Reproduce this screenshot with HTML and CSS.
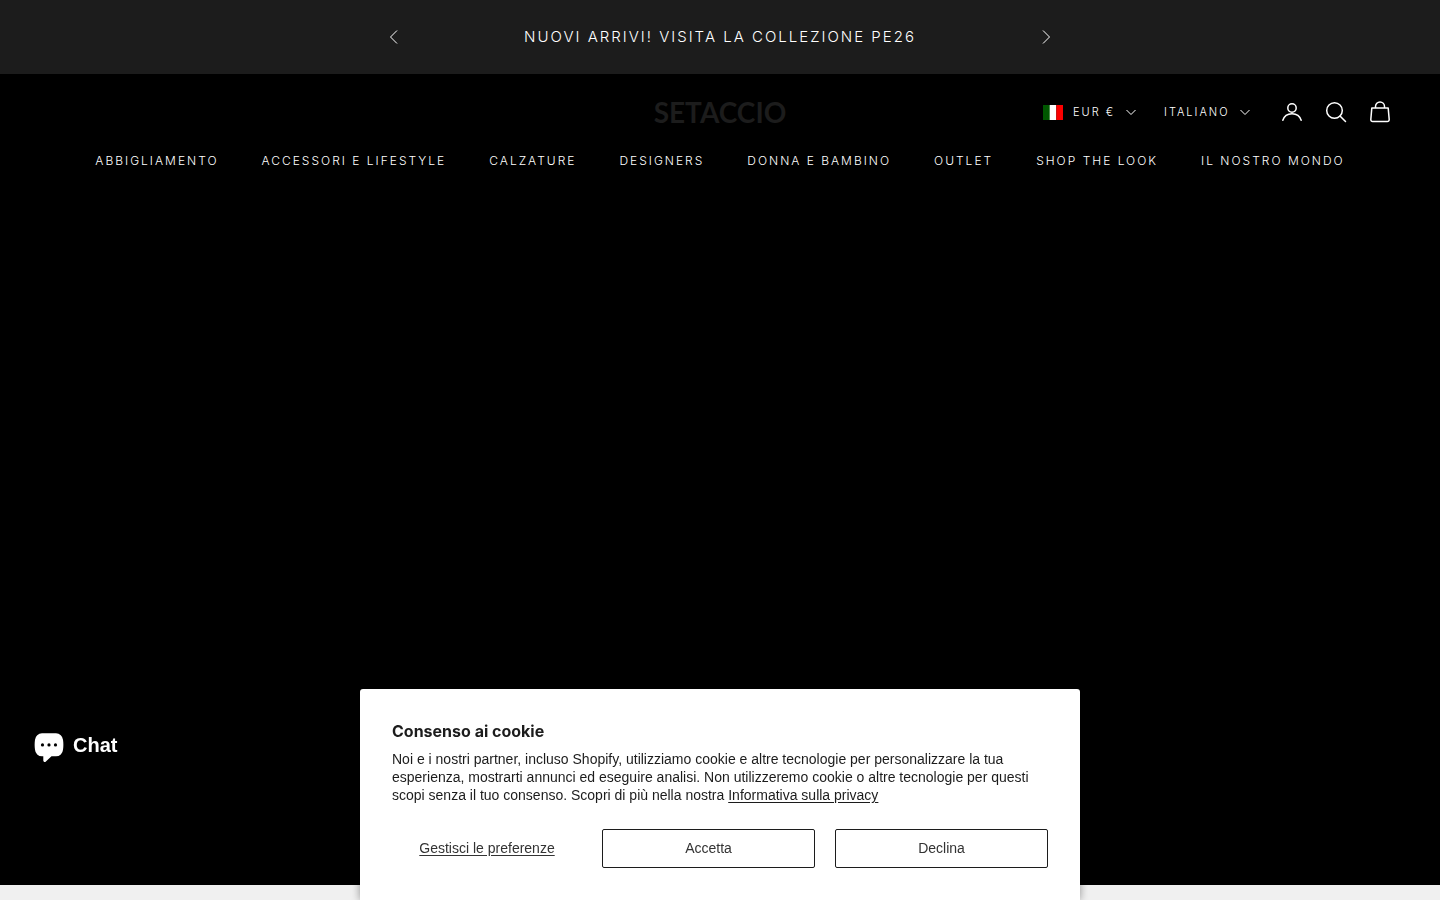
FILE: index.html
```html
<!DOCTYPE html>
<html lang="it">
<head>
    <meta charset="UTF-8">
    <meta name="viewport" content="width=device-width, initial-scale=1.0">
    <title>Setaccio</title>
    <link rel="stylesheet" href="styles.css">
</head>
<body>
    <aside class="announcement-bar">
        <div class="announcement-inner">
            <button class="icon-button" type="button" aria-label="Precedente">
                <svg width="9" height="16" viewBox="0 0 9 16"><path d="M8 1.5 1.5 8 8 14.5"/></svg>
            </button>
            <p>Nuovi arrivi! Visita la collezione PE26</p>
            <button class="icon-button" type="button" aria-label="Successivo">
                <svg width="9" height="16" viewBox="0 0 9 16"><path d="M1 1.5 7.5 8 1 14.5"/></svg>
            </button>
        </div>
    </aside>

    <header class="header">
        <div class="header-top">
            <a class="logo" href="#">SETACCIO</a>
            <div class="header-tools">
                <div class="picker">
                    <svg class="flag" width="20" height="15" viewBox="0 0 20 15">
                        <path fill="#005700" d="M0 0h7v15H0z"/>
                        <path fill="#fff" d="M6.7 0h6.6v15H6.7z"/>
                        <path fill="#fc0000" d="M13.3 0H20v15h-6.7z"/>
                    </svg>
                    <select aria-label="Paese e valuta">
                        <option>EUR €</option>
                    </select>
                    <svg class="chevron" width="10" height="7" viewBox="0 0 10 7"><path d="m.5 1 4.5 4.5L9.5 1"/></svg>
                </div>
                <div class="picker">
                    <select aria-label="Lingua">
                        <option>ITALIANO</option>
                    </select>
                    <svg class="chevron" width="10" height="7" viewBox="0 0 10 7"><path d="m.5 1 4.5 4.5L9.5 1"/></svg>
                </div>
                <div class="header-icons">
                    <a href="#" aria-label="Account">
                        <svg width="22" height="22" viewBox="0 0 22 22">
                            <circle cx="11" cy="7" r="4.2"/>
                            <path d="M1.8 19.3c1.3-4.3 4.7-6.6 9.2-6.6s7.9 2.3 9.2 6.6" stroke-linecap="round"/>
                        </svg>
                    </a>
                    <a href="#" aria-label="Cerca">
                        <svg width="22" height="22" viewBox="0 0 22 22">
                            <circle cx="9.5" cy="9.5" r="7.8"/>
                            <path d="m15 15 5.5 5.5" stroke-linecap="round"/>
                        </svg>
                    </a>
                    <a href="#" aria-label="Carrello">
                        <svg width="22" height="22" viewBox="0 0 22 22">
                            <path d="M2.8 7.1h16.4l1 11.4a1.9 1.9 0 0 1-1.9 2H3.7a1.9 1.9 0 0 1-1.9-2z" stroke-linejoin="round"/>
                            <path d="M6.5 7V5.5a4.5 4.5 0 0 1 9 0V7"/>
                        </svg>
                    </a>
                </div>
            </div>
        </div>
        <nav class="main-nav">
            <a href="#">Abbigliamento</a>
            <a href="#">Accessori e Lifestyle</a>
            <a href="#">Calzature</a>
            <a href="#">Designers</a>
            <a href="#">Donna e Bambino</a>
            <a href="#">Outlet</a>
            <a href="#">Shop the look</a>
            <a href="#">Il nostro mondo</a>
        </nav>
    </header>

    <main class="hero"></main>
    <section class="next-section"></section>

    <button class="chat-button" type="button">
        <svg width="30" height="30" viewBox="0 0 30 30">
            <path fill="#fff" d="M8 .3h14a7 7 0 0 1 7 6.500c.5 3.500.5 6.500 0 10a7 7 0 0 1-7 6.500h-4.500l-5.600 5.300c-1 1-2.600.4-2.600-1V23.300H8a7 7 0 0 1-7-6.500c-.5-3.500-.5-6.500 0-10A7 7 0 0 1 8 .3z"/>
            <circle cx="8.500" cy="11.900" r="1.600"/>
            <circle cx="15" cy="11.900" r="1.600"/>
            <circle cx="21.500" cy="11.900" r="1.600"/>
        </svg>
        Chat
    </button>

    <div class="cookie-banner" role="dialog" aria-labelledby="cookieTitle">
        <h2 id="cookieTitle">Consenso ai cookie</h2>
        <p>Noi e i nostri partner, incluso Shopify, utilizziamo cookie e altre tecnologie per personalizzare la tua esperienza, mostrarti annunci ed eseguire analisi. Non utilizzeremo cookie o altre tecnologie per questi scopi senza il tuo consenso. Scopri di più nella nostra <a href="#">Informativa sulla privacy</a></p>
        <div class="cookie-actions">
            <button class="link-button" type="button">Gestisci le preferenze</button>
            <button type="button">Accetta</button>
            <button type="button">Declina</button>
        </div>
    </div>
</body>
</html>
```
FILE: styles.css
```css
* {
    box-sizing: border-box;
}
body {
    margin: 0;
    min-height: 100vh;
    display: flex;
    flex-direction: column;
    background-color: #000;
    color: #fff;
    font-family: "Liberation Sans", Arial, sans-serif;
}
a {
    color: inherit;
    text-decoration: none;
}
button {
    font: inherit;
    color: inherit;
    cursor: pointer;
}
svg {
    display: block;
    flex: none;
}

/* Announcement bar */
.announcement-bar {
    padding: 24px;
    background-color: #1c1c1c;
}
.announcement-inner {
    display: flex;
    align-items: center;
    justify-content: space-between;
    max-width: 662px;
    margin: 0 auto;
}
.announcement-inner p {
    margin: 0;
    font-family: Inter, sans-serif;
    font-size: 15px;
    font-weight: 300;
    line-height: 26px;
    letter-spacing: 2px;
    text-transform: uppercase;
}
.icon-button {
    padding: 0;
    border: none;
    background: none;
}
.icon-button svg {
    fill: none;
    stroke: #fff;
}

/* Header */
.header {
    padding: 24px 49px;
    font-family: Inter, sans-serif;
    font-weight: 300;
}
.header-top {
    display: grid;
    grid-template-columns: 1fr auto 1fr;
    align-items: center;
    height: 28px;
}
.logo {
    grid-column: 2;
    color: #1c1c1c;
    font-family: Lato, sans-serif;
    font-size: 28px;
    font-weight: bold;
    line-height: 28px;
}
.header-tools {
    display: flex;
    align-items: center;
    justify-content: flex-end;
    gap: 28px;
}
.picker {
    display: flex;
    align-items: center;
    gap: 10px;
}
.picker select {
    appearance: none;
    padding: 0;
    border: none;
    background: none;
    color: #fff;
    font-family: inherit;
    font-size: 11px;
    font-weight: 300;
    letter-spacing: 2px;
    cursor: pointer;
}
.chevron {
    fill: none;
    stroke: #fff;
}
.header-icons {
    display: flex;
    gap: 22px;
    margin-left: 3px;
}
.header-icons svg {
    fill: none;
    stroke: #fff;
    stroke-width: 1.5;
}
.main-nav {
    display: flex;
    flex-wrap: wrap;
    justify-content: center;
    gap: 8px 43px;
    margin-top: 25px;
    font-size: 12px;
    line-height: 20px;
    letter-spacing: 2px;
    text-transform: uppercase;
}
@media (max-width: 1300px) {
    .main-nav {
        column-gap: 24px;
    }
}

.hero {
    flex: 1;
}
.next-section {
    height: 15px;
    background-color: #f0f0f0;
}

/* Chat */
.chat-button {
    position: fixed;
    left: 34px;
    bottom: 137px;
    display: flex;
    align-items: flex-start;
    gap: 9px;
    padding: 0;
    border: none;
    background: none;
    font-size: 20px;
    font-weight: bold;
    line-height: 24px;
}

/* Cookie banner */
.cookie-banner {
    position: fixed;
    right: 0;
    bottom: 0;
    left: 0;
    max-width: 720px;
    margin: 0 auto;
    padding: 32px;
    border-radius: 3px 3px 0 0;
    background-color: #fff;
    color: #1c1c1c;
    box-shadow: 0 0 8px rgba(0, 0, 0, 0.4);
    font-size: 14px;
    line-height: 18px;
}
.cookie-banner h2 {
    margin: 0 0 8px;
    font-family: Inter, sans-serif;
    font-size: 16px;
    font-weight: 700;
    line-height: 21px;
}
.cookie-banner p {
    margin: 0 0 25px;
}
.cookie-banner p a {
    text-decoration: underline;
    text-underline-offset: 2px;
}
.cookie-actions {
    display: flex;
    gap: 20px;
}
.cookie-actions button {
    flex: 1;
    height: 39px;
    padding: 0 0 2px;
    border: 1px solid #1c1c1c;
    border-radius: 2px;
    background: none;
    color: #333;
}
.cookie-actions .link-button {
    flex: 0 0 190px;
    border-color: transparent;
    text-decoration: underline;
    text-underline-offset: 2px;
}
```
